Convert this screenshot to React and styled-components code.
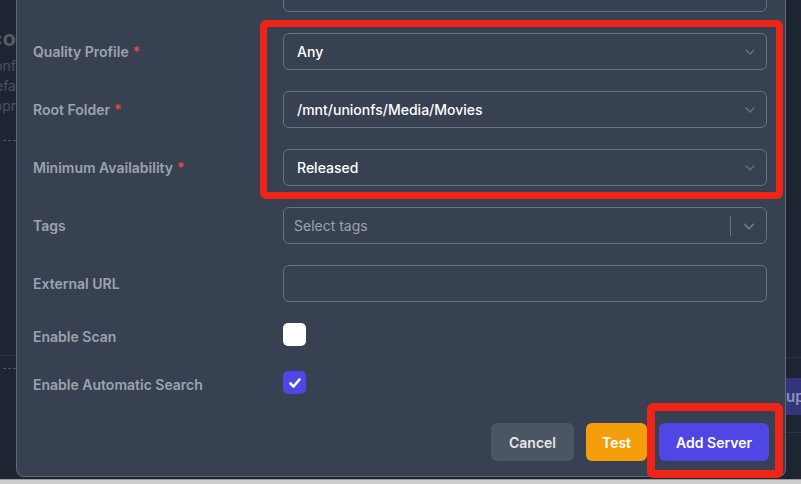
import React from 'react'
import styled, { createGlobalStyle } from 'styled-components'

const GlobalStyle = createGlobalStyle`
  html, body {
    margin: 0;
    padding: 0;
    background: #1f2633;
  }
  body {
    font-family: Inter, 'Noto Sans', 'Liberation Sans', sans-serif;
    -webkit-font-smoothing: antialiased;
  }
  * { box-sizing: border-box; }
`

// page + backdrop
const Page = styled.div`
  position: relative;
  width: 801px;
  height: 484px;
  display: flex;
  flex-direction: column;
  overflow: hidden;
  background: #1f2633;
`

const Stage = styled.div`
  display: flex;
  height: 479px;
`

const BrowserEdge = styled.div`
  height: 5px;
  background: #cdcdcd;
  border-top: 1px solid #9a9a9a;
`

const Backdrop = styled.div`
  width: ${({ $width }) => $width}px;
  flex: none;
  display: flex;
  flex-direction: column;
  align-items: ${({ $side }) => ($side === 'left' ? 'flex-end' : 'flex-start')};
  overflow: hidden;
  background: #1e2532;
`

const BackdropHeading = styled.div`
  margin-top: 26px;
  font-size: 22px;
  font-weight: 700;
  line-height: 24px;
  color: #555c68;
  white-space: nowrap;
`

const BackdropText = styled.div`
  font-size: 14px;
  line-height: 20px;
  color: #4a515e;
  white-space: nowrap;
  margin-top: ${({ $top }) => $top || 0}px;
`

const DashedRule = styled.div`
  align-self: stretch;
  margin: ${({ $top }) => $top}px 0 0 3px;
  border-top: 1px dashed #4d5461;
`

const SolidRule = styled.div`
  align-self: stretch;
  margin-top: ${({ $top }) => $top}px;
  border-top: 1px solid #2c3340;
`

const GhostButton = styled.div`
  margin-top: ${({ $top }) => $top}px;
  height: 37px;
  width: 40px;
  display: flex;
  align-items: center;
  background: #33367a;
  color: #8f93b8;
  font-size: 15px;
  font-weight: 600;
  white-space: nowrap;
`

// modal
const Modal = styled.div`
  width: 770px;
  height: 477px;
  flex: none;
  display: flex;
  flex-direction: column;
  justify-content: flex-end;
  overflow: hidden;
  padding: 0 16px 15px;
  background: #374151;
  border: 1px solid #626976;
  border-top: none;
  border-radius: 0 0 8px 8px;
`

const Form = styled.div`
  display: flex;
  flex-direction: column;
  gap: 21px;
`

const Row = styled.div`
  display: grid;
  grid-template-columns: 250px 484px;
  align-items: ${({ $check }) => ($check ? 'start' : 'center')};
  min-height: ${({ $check }) => ($check ? 27 : 37)}px;
`

const Label = styled.label`
  font-size: 14px;
  font-weight: 600;
  line-height: 20px;
  color: #9ca3af;
  padding-top: ${({ $check }) => ($check ? 4 : 0)}px;
`

const Required = styled.span`
  color: #ef4444;
  margin-left: 4px;
`

const Field = styled.div`
  position: relative;
  height: 37px;
  display: flex;
  align-items: center;
  padding: 0 ${({ $pad }) => $pad || 13}px;
  border: 1px solid #6b7280;
  border-radius: 6px;
  background: #374151;
  color: #ffffff;
  font-size: 14px;
  font-weight: 500;
`

const Value = styled.span`
  flex: 1;
  white-space: nowrap;
`

const Placeholder = styled.span`
  flex: 1;
  color: #9ca3af;
  font-weight: 400;
`

const Chevron = styled.svg`
  width: 10px;
  height: 6px;
  margin-right: -2px;
`

const Indicator = styled.div`
  display: flex;
  align-items: center;
  gap: 9px;
  margin-right: -2px;
`

const Separator = styled.span`
  width: 1px;
  height: 20px;
  background: #6b7280;
`

const Checkbox = styled.span`
  width: 23px;
  height: 23px;
  display: flex;
  align-items: center;
  justify-content: center;
  border-radius: 5px;
  background: ${({ $checked }) => ($checked ? '#4f46e5' : '#ffffff')};
`

const Footer = styled.div`
  margin-top: 25px;
  display: flex;
  justify-content: flex-end;
  gap: 12px;
`

const Button = styled.button`
  height: 38px;
  padding: 0 ${({ $pad }) => $pad}px;
  border: none;
  border-radius: 6px;
  font-family: inherit;
  font-size: 14px;
  font-weight: 600;
  color: ${({ $variant }) => ($variant === 'cancel' ? '#e5e7eb' : '#ffffff')};
  background: ${({ $variant }) =>
    $variant === 'cancel' ? '#4b5563' : $variant === 'warning' ? '#f59e0b' : '#4f46e5'};
`

// annotation boxes drawn over the screenshot
const Highlight = styled.div`
  position: absolute;
  border: ${({ $w }) => $w}px solid #ee2417;
  border-radius: 6px;
  pointer-events: none;
`

const SelectChevron = () => (
  <Chevron viewBox="0 0 10 6" fill="none">
    <path d="M1 1l4 4 4-4" stroke="#6b7280" strokeWidth="1.3" strokeLinecap="round" strokeLinejoin="round" />
  </Chevron>
)

const fields = [
  { label: 'Quality Profile', value: 'Any', required: true },
  { label: 'Root Folder', value: '/mnt/unionfs/Media/Movies', required: true },
  { label: 'Minimum Availability', value: 'Released', required: true },
]

const App = () => (
  <Page>
    <GlobalStyle />
    <Stage>
      <Backdrop $width={16} $side="left">
        <BackdropHeading>Radarr Setting co</BackdropHeading>
        <BackdropText $top={6}>Configure your Radarr server(s) below. conf</BackdropText>
        <BackdropText>only two of them can be marked as defa</BackdropText>
        <BackdropText>the appropriate server when the opr</BackdropText>
        <DashedRule $top={24} />
        <SolidRule $top={214} />
        <DashedRule $top={12} />
      </Backdrop>

      <Modal>
        <Form>
          <Row>
            <Label>URL Base</Label>
            <Field />
          </Row>
          {fields.map((f) => (
            <Row key={f.label}>
              <Label>
                {f.label}
                {f.required && <Required>*</Required>}
              </Label>
              <Field>
                <Value>{f.value}</Value>
                <SelectChevron />
              </Field>
            </Row>
          ))}
          <Row>
            <Label>Tags</Label>
            <Field $pad={10}>
              <Placeholder>Select tags</Placeholder>
              <Indicator>
                <Separator />
                <svg width="18" height="18" viewBox="0 0 20 20" fill="#6b7280">
                  <path d="M4.516 7.548c0.436-0.446 1.043-0.481 1.576 0l3.908 3.747 3.908-3.747c0.533-0.481 1.141-0.446 1.574 0 0.436 0.445 0.408 1.197 0 1.615-0.406 0.418-4.695 4.502-4.695 4.502-0.217 0.223-0.502 0.335-0.787 0.335s-0.57-0.112-0.789-0.335c0 0-4.287-4.084-4.695-4.502s-0.436-1.17 0-1.615z" />
                </svg>
              </Indicator>
            </Field>
          </Row>
          <Row>
            <Label>External URL</Label>
            <Field />
          </Row>
          <Row $check>
            <Label $check>Enable Scan</Label>
            <Checkbox />
          </Row>
          <Row $check>
            <Label $check>Enable Automatic Search</Label>
            <Checkbox $checked>
              <svg width="16" height="16" viewBox="0 0 16 16" fill="none">
                <path d="M3.5 8.5l3 3 6-7" stroke="#ffffff" strokeWidth="2.6" strokeLinecap="round" strokeLinejoin="round" />
              </svg>
            </Checkbox>
          </Row>
        </Form>
        <Footer>
          <Button $variant="cancel" $pad={18}>Cancel</Button>
          <Button $variant="warning" $pad={16}>Test</Button>
          <Button $variant="primary" $pad={17}>Add Server</Button>
        </Footer>
      </Modal>

      <Backdrop $width={15} $side="right">
        <SolidRule $top={357} />
        <GhostButton $top={20}>up</GhostButton>
        <SolidRule $top={17} />
      </Backdrop>
    </Stage>
    <BrowserEdge />

    <Highlight $w={7} style={{ left: 260, top: 20, width: 523, height: 179 }} />
    <Highlight $w={8} style={{ left: 647, top: 403, width: 136, height: 75 }} />
  </Page>
)

export default App
